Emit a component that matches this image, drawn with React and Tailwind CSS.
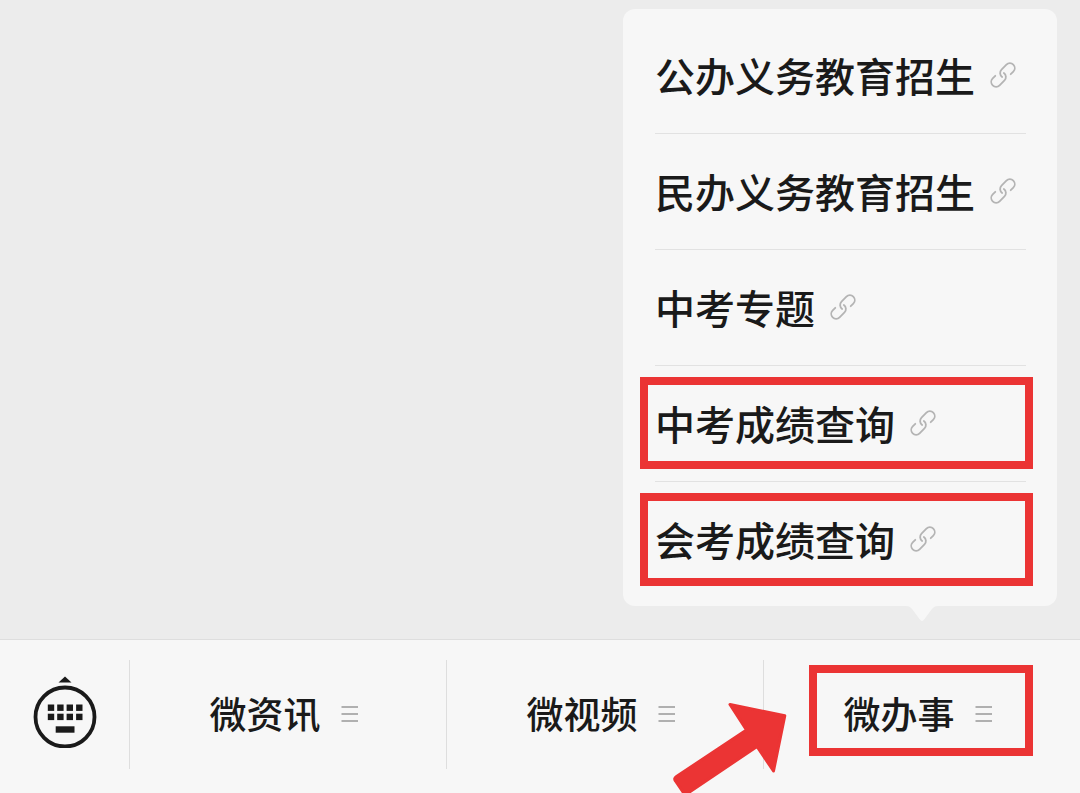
const menuItems = [
  { id: 1, label: "公办义务教育招生" },
  { id: 2, label: "民办义务教育招生" },
  { id: 3, label: "中考专题" },
  { id: 4, label: "中考成绩查询", highlighted: true },
  { id: 5, label: "会考成绩查询", highlighted: true },
];

const tabs = [
  { id: "news", label: "微资讯" },
  { id: "video", label: "微视频" },
  { id: "service", label: "微办事", highlighted: true },
];

const LinkIcon = () => (
  <svg
    className="size-7 shrink-0"
    viewBox="-14 -14 28 28"
    fill="none"
    stroke="#b4b4b4"
    strokeWidth="1.8"
    strokeLinecap="round"
    aria-hidden="true"
  >
    <g transform="rotate(-45)">
      <path d="M6 4.9H9.7A4.9 4.9 0 0 0 9.7 -4.9H2.8A4.9 4.9 0 0 0 -2 0.8" />
      <path d="M-6 -4.9H-9.7A4.9 4.9 0 0 0 -9.7 4.9H-2.8A4.9 4.9 0 0 0 2 -0.8" />
    </g>
  </svg>
);

const ListIcon = () => (
  <svg className="w-[18px] h-[18px] shrink-0" viewBox="0 0 18 18" aria-hidden="true">
    <path d="M0.500 2H17M0.500 9H17M0.500 16H17" stroke="#b0b0b0" strokeWidth="2" />
  </svg>
);

const KeyboardIcon = () => (
  <svg className="w-16 h-[72px]" viewBox="0 0 64 72" fill="#1a1a1a" aria-hidden="true">
    <path d="M32 0.500L38.500 6.500H25.500Z" />
    <circle cx="32" cy="41" r="29.500" fill="none" stroke="#1a1a1a" strokeWidth="3.800" />
    {[28.5, 37.7].map((y) =>
      [14.8, 24.2, 33.6, 43.1].map((x) => (
        <rect key={`${x}-${y}`} x={x} y={y} width="6.400" height="6.400" />
      ))
    )}
    <rect x="22.700" y="50.300" width="18.800" height="6.400" />
  </svg>
);

const Arrow = () => (
  <svg
    className="absolute top-[42px] right-full -mr-6 w-[116px] h-[91px] pointer-events-none"
    viewBox="0 0 116 91"
    fill="#eb3434"
    stroke="#eb3434"
    strokeWidth="3"
    strokeLinejoin="round"
    aria-hidden="true"
  >
    <path d="M58 2.500L112.800 13.800L101.500 69L85 44.500L16 91Q13 93 11 90L3.500 79Q1.500 76.500 4.500 74.500L74.500 28Z" />
  </svg>
);

const App = () => {
  return (
    <div className="min-h-screen flex flex-col bg-[#ececec] text-[#1a1a1a] font-medium font-['Noto_Sans_CJK_SC',sans-serif]">
      <main className="flex-1 flex flex-col items-end justify-end pt-2 pr-[23px] pb-[33px]">
        {/* Popup menu */}
        <nav className="relative w-[434px] max-w-full rounded-xl bg-[#f7f7f7] pt-[9px] pb-2 pl-8 pr-[31px]">
          <ul>
            {menuItems.map((item) => (
              <li
                key={item.id}
                className="relative h-[116px] border-b border-[#e2e2e2] last:border-b-0"
              >
                <a href="#" className="flex h-full items-center gap-[14px] pb-0.5 text-[40px] leading-none whitespace-nowrap">
                  {item.label}
                  <LinkIcon />
                </a>
                {item.highlighted && (
                  <span className="absolute top-[11px] bottom-3 -left-[15px] -right-[7px] border-8 border-[#eb3434] pointer-events-none" />
                )}
              </li>
            ))}
          </ul>
          <svg
            className="absolute top-full right-[119px] w-8 h-4"
            viewBox="0 0 32 16"
            fill="#f7f7f7"
            aria-hidden="true"
          >
            <path d="M0 0C3 0 4.500 1 6.500 3.500L13.500 13Q16 17 18.500 13L25.500 3.500C27.500 1 29 0 32 0Z" />
          </svg>
        </nav>
      </main>

      {/* Bottom bar */}
      <footer className="flex border-t border-[#dedede] bg-[#f7f7f7] pt-5 pb-6">
        <button type="button" aria-label="键盘" className="flex w-[129px] shrink-0 items-center justify-center pb-1.5">
          <KeyboardIcon />
        </button>
        {tabs.map((tab) => (
          <div key={tab.id} className="relative flex-1 h-[109px] border-l border-[#dedede]">
            <button
              type="button"
              className="flex w-full h-full items-center justify-center gap-5 pr-2 pb-0.5 text-[37px] leading-none whitespace-nowrap"
            >
              {tab.label}
              <ListIcon />
            </button>
            {tab.highlighted && (
              <>
                <span className="absolute top-[5px] bottom-[13px] left-[45px] right-[47px] border-8 border-[#eb3434] pointer-events-none" />
                <Arrow />
              </>
            )}
          </div>
        ))}
      </footer>
    </div>
  );
};

export default App;
